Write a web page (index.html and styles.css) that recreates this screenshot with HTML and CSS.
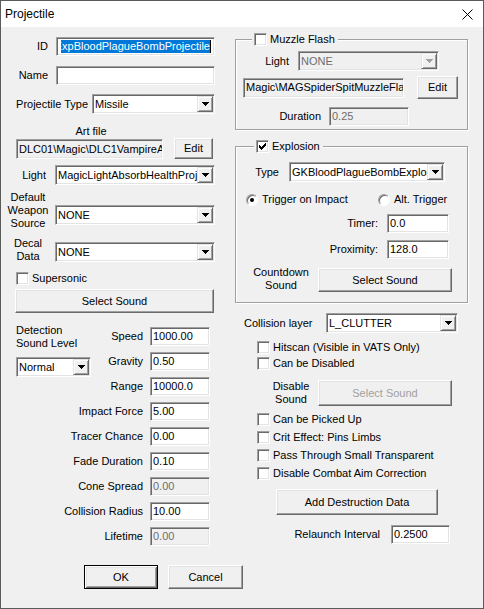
FILE: index.html
```html
<!DOCTYPE html>
<html lang="en">

<head>
    <meta charset="UTF-8">
    <title>Projectile</title>
    <link rel="stylesheet" href="styles.css">
</head>

<body>

    <div class="window">
        <div class="titlebar">
            <span class="title">Projectile</span>
            <svg class="close" width="11" height="11" viewBox="0 0 11 11"><path d="M0.5 0.5L10.5 10.5M10.5 0.5L0.5 10.5" stroke="#000" fill="none"/></svg>
        </div>

        <div class="dialog">
            <!-- left half: identity, art and flight values -->
            <div class="col-left">
                <div class="row r-id">
                    <span class="lab lab-id">ID</span>
                    <div class="edit edit-id"><span class="clip"><span class="sel">GKExpBloodPlagueBombProjectile</span><span class="caret"></span></span></div>
                </div>
                <div class="row r-name">
                    <span class="lab lab-id">Name</span>
                    <div class="edit edit-id"></div>
                </div>
                <div class="row r-type">
                    <span class="lab lab-type">Projectile Type</span>
                    <div class="combo w-type"><span class="val">Missile</span><span class="drop"><svg width="7" height="4"><path d="M0 0h7v1H0zM1 1h5v1H1zM2 2h3v1H2zM3 3h1v1H3z"/></svg></span></div>
                </div>

                <div class="art-cap">Art file</div>
                <div class="row r-art">
                    <div class="edit ro w-art">DLC01\Magic\DLC1VampireAbsorbHealthProjectile.nif</div>
                    <button class="btn btn-edit">Edit</button>
                </div>

                <div class="row r-light">
                    <span class="lab lab-light">Light</span>
                    <div class="combo w-wide"><span class="val">MagicLightAbsorbHealthProjectile</span><span class="drop"><svg width="7" height="4"><path d="M0 0h7v1H0zM1 1h5v1H1zM2 2h3v1H2zM3 3h1v1H3z"/></svg></span></div>
                </div>
                <div class="row r-weapon">
                    <span class="lab-stack">Default<br>Weapon<br>Source</span>
                    <div class="combo w-wide"><span class="val">NONE</span><span class="drop"><svg width="7" height="4"><path d="M0 0h7v1H0zM1 1h5v1H1zM2 2h3v1H2zM3 3h1v1H3z"/></svg></span></div>
                </div>
                <div class="row r-decal">
                    <span class="lab-stack">Decal<br>Data</span>
                    <div class="combo w-wide"><span class="val">NONE</span><span class="drop"><svg width="7" height="4"><path d="M0 0h7v1H0zM1 1h5v1H1zM2 2h3v1H2zM3 3h1v1H3z"/></svg></span></div>
                </div>

                <div class="row r-super">
                    <span class="chk"></span><span class="chk-text">Supersonic</span>
                </div>
                <button class="btn btn-sound-main">Select Sound</button>

                <div class="stats">
                    <div class="detect">
                        <div>Detection<br>Sound Level</div>
                        <div class="combo w-detect"><span class="val">Normal</span><span class="drop"><svg width="7" height="4"><path d="M0 0h7v1H0zM1 1h5v1H1zM2 2h3v1H2zM3 3h1v1H3z"/></svg></span></div>
                    </div>
                    <span class="lab short">Speed</span><div class="edit">1000.00</div>
                    <span class="lab short">Gravity</span><div class="edit">0.50</div>
                    <span class="lab">Range</span><div class="edit">10000.0</div>
                    <span class="lab">Impact Force</span><div class="edit">5.00</div>
                    <span class="lab">Tracer Chance</span><div class="edit">0.00</div>
                    <span class="lab">Fade Duration</span><div class="edit">0.10</div>
                    <span class="lab">Cone Spread</span><div class="edit off">0.00</div>
                    <span class="lab">Collision Radius</span><div class="edit">10.00</div>
                    <span class="lab">Lifetime</span><div class="edit off">0.00</div>
                </div>
            </div>

            <!-- right half: muzzle flash, explosion, collision flags -->
            <div class="col-right">
                <div class="group g-muzzle">
                    <div class="legend lg-muzzle"><span class="chk"></span><span class="chk-text">Muzzle Flash</span></div>
                    <div class="row r-mlight">
                        <span class="lab lab-mlight">Light</span>
                        <div class="combo off w-mlight"><span class="val">NONE</span><span class="drop"><svg width="7" height="4"><path d="M0 0h7v1H0zM1 1h5v1H1zM2 2h3v1H2zM3 3h1v1H3z"/></svg></span></div>
                    </div>
                    <div class="row r-path">
                        <div class="edit ro w-path">Magic\MAGSpiderSpitMuzzleFlash.nif</div>
                        <button class="btn btn-edit2">Edit</button>
                    </div>
                    <div class="row r-dur">
                        <span class="lab lab-dur">Duration</span>
                        <div class="edit off w-dur">0.25</div>
                    </div>
                </div>

                <div class="group g-expl">
                    <div class="legend lg-expl"><span class="chk on"><svg width="7" height="7"><path d="M6 0h1v1H6zM5 1h2v1H5zM0 2h1v1H0zM4 2h3v1H4zM0 3h2v1H0zM3 3h3v1H3zM0 4h5v1H0zM1 5h3v1H1zM2 6h1v1H2z"/></svg></span><span class="chk-text">Explosion</span></div>
                    <div class="row r-etype">
                        <span class="lab lab-etype">Type</span>
                        <div class="combo w-etype"><span class="val">GKBloodPlagueBombExplosion</span><span class="drop"><svg width="7" height="4"><path d="M0 0h7v1H0zM1 1h5v1H1zM2 2h3v1H2zM3 3h1v1H3z"/></svg></span></div>
                    </div>
                    <div class="row r-radio">
                        <span class="radio-item first"><span class="radio on"></span><span class="chk-text">Trigger on Impact</span></span>
                        <span class="radio-item"><span class="radio"></span><span class="chk-text">Alt. Trigger</span></span>
                    </div>
                    <div class="row r-timer">
                        <span class="lab lab-timer">Timer:</span>
                        <div class="edit w-timer">0.0</div>
                    </div>
                    <div class="row r-prox">
                        <span class="lab lab-timer">Proximity:</span>
                        <div class="edit w-timer">128.0</div>
                    </div>
                    <div class="row r-count">
                        <span class="lab-stack lab-count">Countdown<br>Sound</span>
                        <button class="btn btn-count">Select Sound</button>
                    </div>
                </div>

                <div class="row r-coll">
                    <span class="lab-coll">Collision layer</span>
                    <div class="combo w-coll"><span class="val">L_CLUTTER</span><span class="drop"><svg width="7" height="4"><path d="M0 0h7v1H0zM1 1h5v1H1zM2 2h3v1H2zM3 3h1v1H3z"/></svg></span></div>
                </div>

                <div class="row chk-row first"><span class="chk"></span><span class="chk-text">Hitscan (Visible in VATS Only)</span></div>
                <div class="row chk-row tight"><span class="chk"></span><span class="chk-text">Can be Disabled</span></div>

                <div class="row r-dsound">
                    <span class="lab-stack lab-dsound">Disable<br>Sound</span>
                    <button class="btn btn-dsound" disabled>Select Sound</button>
                </div>

                <div class="row chk-row after-btn"><span class="chk"></span><span class="chk-text">Can be Picked Up</span></div>
                <div class="row chk-row"><span class="chk"></span><span class="chk-text">Crit Effect: Pins Limbs</span></div>
                <div class="row chk-row"><span class="chk"></span><span class="chk-text">Pass Through Small Transparent</span></div>
                <div class="row chk-row"><span class="chk"></span><span class="chk-text">Disable Combat Aim Correction</span></div>

                <button class="btn btn-destr">Add Destruction Data</button>

                <div class="row r-relaunch">
                    <span class="lab lab-relaunch">Relaunch Interval</span>
                    <div class="edit w-relaunch">0.2500</div>
                </div>
            </div>

            <div class="footer">
                <button class="btn btn-ok">OK</button>
                <button class="btn btn-cancel">Cancel</button>
            </div>
        </div>
    </div>

</body>

</html>
```

FILE: styles.css
```css
body {
    margin: 0;
}

.window {
    width: 484px;
    height: 609px;
    box-sizing: border-box;
    border: 1px solid #5b5b5b;
    background-color: #f0f0f0;
    font-family: "Liberation Sans", Arial, sans-serif;
    font-size: 11px;
    line-height: 13px;
    color: #000;
    overflow: hidden;
}

.titlebar {
    height: 26px;
    background-color: #fff;
    display: flex;
    align-items: center;
    padding-left: 4px;
}

.title {
    flex: 1;
    font-size: 12px;
}

.close {
    margin-right: 10px;
}

.dialog {
    display: grid;
    grid-template-columns: 233px 1fr;
}

/* shared controls */

.row {
    display: flex;
    align-items: center;
}

.lab {
    flex-shrink: 0;
    text-align: right;
    white-space: nowrap;
}

.lab-stack {
    flex-shrink: 0;
    width: 54px;
    text-align: center;
}

.edit {
    box-sizing: border-box;
    height: 19px;
    display: flex;
    align-items: center;
    padding: 0 2px;
    background-color: #fff;
    border: 1px solid;
    border-color: #a0a0a0 #fff #fff #a0a0a0;
    box-shadow: inset 1px 1px #696969, inset -1px -1px #e3e3e3;
    white-space: nowrap;
    overflow: hidden;
}

.edit.ro {
    background-color: #f0f0f0;
}

.edit.off {
    background-color: #f0f0f0;
    color: #6d6d6d;
}

/* text scrolled to its end, as after typing */
.clip {
    flex: 1;
    display: flex;
    justify-content: flex-end;
    overflow: hidden;
    margin: 0 1px 0 2px;
}

.sel {
    flex-shrink: 0;
    background-color: #0078d7;
    color: #fff;
}

.caret {
    flex-shrink: 0;
    width: 1px;
    height: 13px;
    background-color: #000;
}

.combo {
    box-sizing: border-box;
    height: 20px;
    display: flex;
    background-color: #fff;
    border: 1px solid;
    border-color: #a0a0a0 #fff #fff #a0a0a0;
    box-shadow: inset 1px 1px #696969, inset -1px -1px #e3e3e3;
    padding: 1px;
}

.combo .val {
    flex: 1;
    padding-left: 1px;
    line-height: 16px;
    white-space: nowrap;
    overflow: hidden;
}

.combo .drop {
    box-sizing: border-box;
    width: 16px;
    height: 16px;
    display: flex;
    align-items: center;
    justify-content: center;
    background-color: #f0f0f0;
    border: 1px solid;
    border-color: #e3e3e3 #696969 #696969 #e3e3e3;
    box-shadow: inset 1px 1px #fff, inset -1px -1px #a0a0a0;
}

.combo .drop svg {
    fill: #000;
}

.combo.off {
    background-color: #f0f0f0;
    color: #6d6d6d;
}

.combo.off .drop svg {
    fill: #a0a0a0;
}

.btn {
    box-sizing: border-box;
    padding: 0;
    font: inherit;
    color: #000;
    background-color: #f0f0f0;
    border: 1px solid;
    border-color: #fff #696969 #696969 #fff;
    box-shadow: inset -1px -1px #a0a0a0, inset 1px 1px #e3e3e3;
}

.btn:disabled {
    color: #a0a0a0;
}

.chk {
    flex-shrink: 0;
    box-sizing: border-box;
    width: 13px;
    height: 13px;
    display: flex;
    align-items: center;
    justify-content: center;
    background-color: #fff;
    border: 1px solid;
    border-color: #a0a0a0 #fff #fff #a0a0a0;
    box-shadow: inset 1px 1px #696969, inset -1px -1px #e3e3e3;
}

.chk svg {
    fill: #000;
}

.chk-text {
    margin-left: 3px;
    white-space: nowrap;
}

.radio-item {
    display: flex;
    align-items: center;
}

.radio-item.first {
    width: 132px;
}

.radio {
    box-sizing: border-box;
    width: 12px;
    height: 12px;
    display: flex;
    align-items: center;
    justify-content: center;
    border-radius: 50%;
    background-color: #fff;
    border: 1px solid;
    border-color: #a0a0a0 #fff #fff #a0a0a0;
    box-shadow: inset 1px 1px #696969;
}

.radio.on::after {
    content: "";
    width: 4px;
    height: 4px;
    border-radius: 50%;
    background-color: #000;
}

.radio-item .chk-text {
    margin-left: 4px;
}

/* left column */

.r-id {
    margin-top: 10px;
}

.lab-id {
    width: 47px;
    margin-right: 8px;
}

.edit-id {
    width: 159px;
}

.r-name {
    margin-top: 10px;
}

.r-type {
    margin-top: 9px;
}

.lab-type {
    width: 87px;
    margin-right: 4px;
}

.w-type {
    width: 123px;
}

.art-cap {
    margin: 11px 0 0 15px;
    width: 150px;
    text-align: center;
}

.r-art {
    margin-left: 15px;
    align-items: flex-start;
}

.w-art {
    width: 147px;
    height: 20px;
    margin-top: 1px;
}

.btn-edit {
    width: 39px;
    height: 21px;
    margin-left: 11px;
}

.r-light {
    margin-top: 6px;
}

.lab-light {
    width: 45px;
    margin-right: 9px;
}

.w-wide {
    width: 160px;
}

.r-weapon {
    margin-top: 6px;
    align-items: flex-start;
}

.r-weapon .combo {
    margin-top: 14px;
}

.r-decal {
    margin-top: 7px;
    align-items: flex-start;
}

.r-decal .combo {
    margin-top: 5px;
}

.r-super {
    margin: 9px 0 0 15px;
}

.btn-sound-main {
    display: block;
    width: 199px;
    height: 24px;
    margin: 4px 0 0 14px;
}

.stats {
    width: 194px;
    margin: 14px 0 0 15px;
    display: grid;
    grid-template-columns: 80px 1fr 60px;
    grid-auto-rows: 19px;
    row-gap: 6px;
}

.stats .lab {
    grid-column: 1 / 3;
    align-self: center;
    padding-right: 7px;
}

.stats .lab.short {
    grid-column: 2;
}

.stats .edit {
    grid-column: 3;
}

.detect {
    grid-column: 1;
    grid-row: 1 / 3;
    align-self: start;
    margin-top: -3px;
}

.w-detect {
    width: 75px;
    margin-top: 7px;
}

.footer {
    grid-column: 1 / -1;
    display: flex;
    gap: 10px;
    margin: 19px 0 0 83px;
}

.btn-ok {
    width: 74px;
    height: 24px;
    border: 1px solid #000;
    box-shadow: inset 1px 1px #fff, inset -1px -1px #696969, inset 2px 2px #e3e3e3, inset -2px -2px #a0a0a0;
}

.btn-cancel {
    width: 75px;
    height: 24px;
}

/* right column */

.group {
    box-sizing: border-box;
    width: 233px;
    margin-left: 1px;
    border: 1px solid #a0a0a0;
    box-shadow: inset 1px 1px #fff, 1px 1px #fff;
}

.legend {
    display: flex;
    align-items: center;
    width: fit-content;
    margin-top: -7px;
    padding: 0 3px 0 2px;
    background-color: #f0f0f0;
}

.g-muzzle {
    margin-top: 12px;
    padding-bottom: 3px;
}

.lg-muzzle {
    margin-left: 16px;
}

.r-mlight {
    margin-top: 5px;
}

.lab-mlight {
    width: 53px;
    margin-right: 9px;
}

.w-mlight {
    width: 141px;
}

.r-path {
    margin: 5px 0 0 7px;
}

.w-path {
    width: 161px;
    height: 20px;
}

.btn-edit2 {
    width: 41px;
    height: 23px;
    margin-left: 13px;
}

.r-dur {
    margin-top: 8px;
}

.lab-dur {
    width: 85px;
    margin-right: 8px;
}

.w-dur {
    width: 80px;
}

.g-expl {
    margin-top: 16px;
    padding-bottom: 10px;
}

.lg-expl {
    margin-left: 18px;
}

.r-etype {
    margin-top: 9px;
}

.lab-etype {
    width: 43px;
    margin-right: 10px;
}

.w-etype {
    width: 156px;
}

.r-radio {
    margin: 11px 0 0 10px;
}

.r-timer {
    margin: 8px 18px 0 0;
    justify-content: flex-end;
}

.r-prox {
    margin: 7px 18px 0 0;
    justify-content: flex-end;
}

.lab-timer {
    margin-right: 9px;
}

.w-timer {
    width: 62px;
}

.r-count {
    margin-top: 7px;
    align-items: flex-start;
}

.lab-count {
    width: 74px;
    margin-left: 8px;
}

.btn-count {
    width: 134px;
    height: 24px;
    margin-top: 2px;
}

.r-coll {
    margin: 10px 0 0 10px;
}

.lab-coll {
    width: 82px;
    white-space: nowrap;
}

.w-coll {
    width: 132px;
}

.chk-row {
    margin: 5px 0 0 23px;
}

.chk-row.first {
    margin-top: 8px;
}

.chk-row.tight {
    margin-top: 3px;
}

.chk-row.after-btn {
    margin-top: 7px;
}

.r-dsound {
    margin-top: 10px;
    align-items: flex-start;
}

.lab-dsound {
    margin-left: 30px;
}

.btn-dsound {
    width: 134px;
    height: 26px;
}

.btn-destr {
    display: block;
    width: 162px;
    height: 26px;
    margin: 9px 0 0 42px;
}

.r-relaunch {
    margin: 10px 33px 0 0;
    justify-content: flex-end;
}

.lab-relaunch {
    margin-right: 11px;
}

.w-relaunch {
    width: 59px;
}
```
